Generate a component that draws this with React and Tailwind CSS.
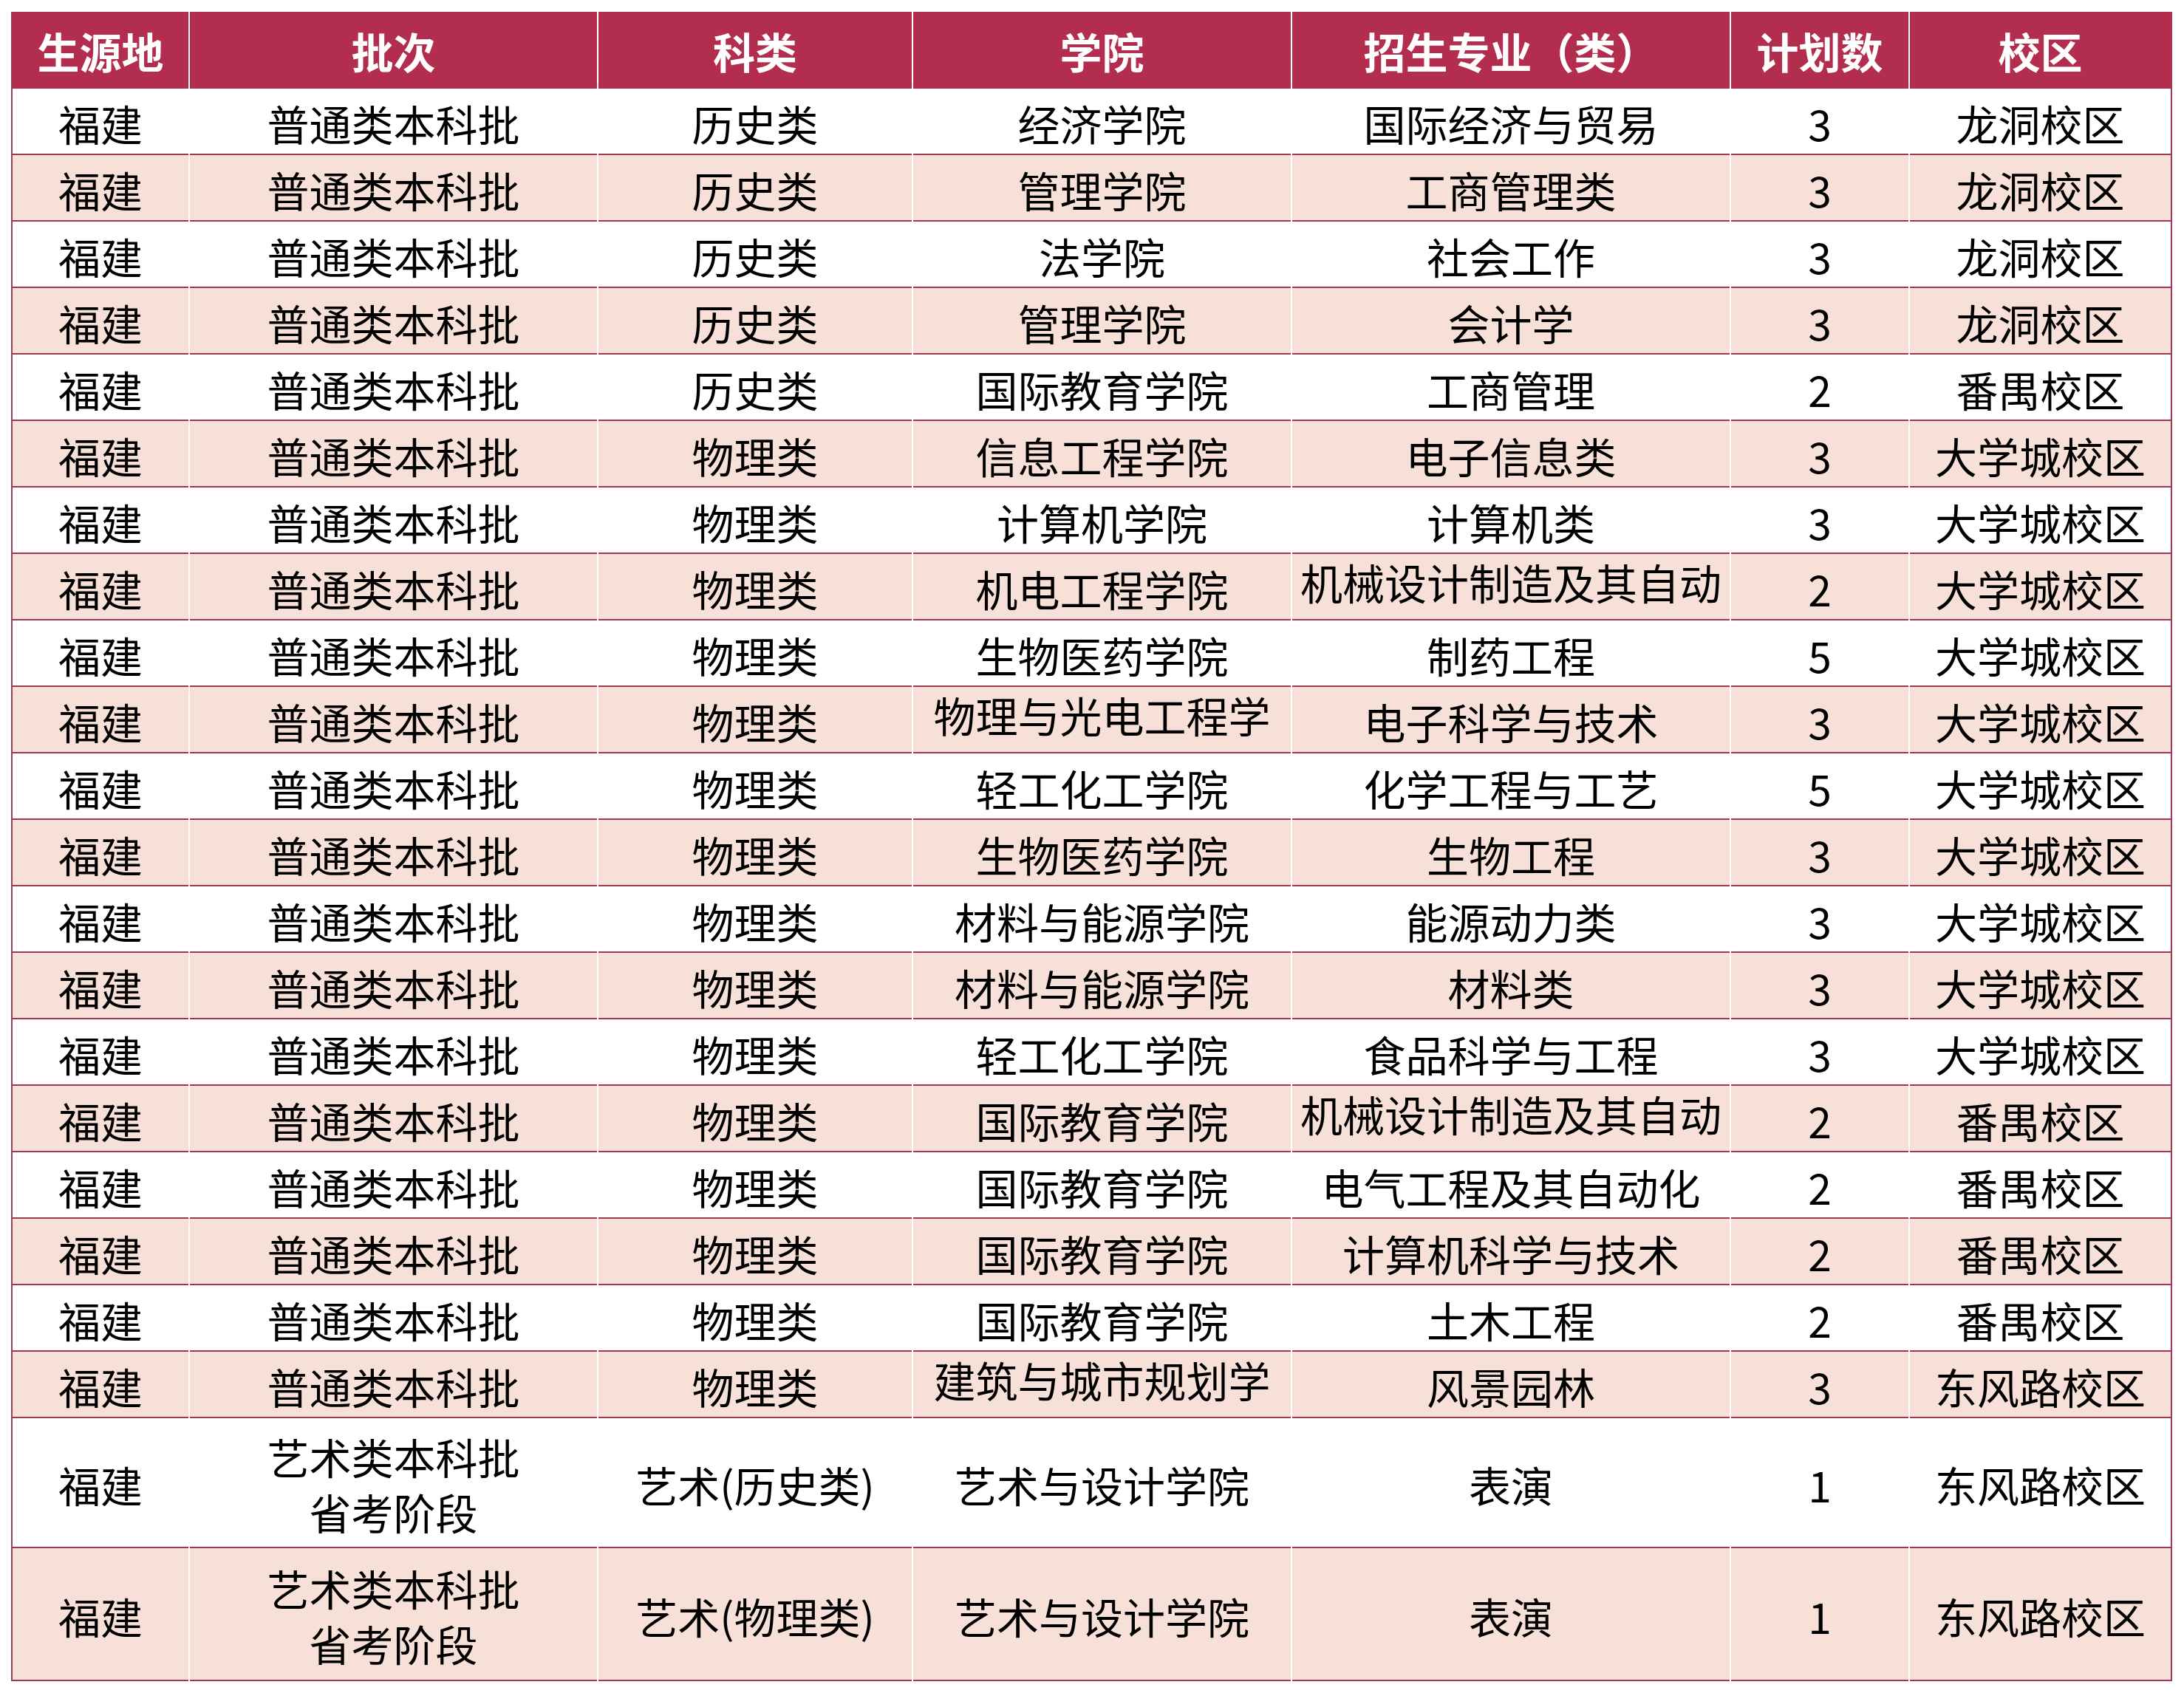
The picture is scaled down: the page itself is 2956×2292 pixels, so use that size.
import React from "react";

const headers = ["生源地", "批次", "科类", "学院", "招生专业（类）", "计划数", "校区"];

// clip: index of a cell whose text is the visible first line of a longer name
const rows = [
  { cells: ["福建", "普通类本科批", "历史类", "经济学院", "国际经济与贸易", "3", "龙洞校区"] },
  { cells: ["福建", "普通类本科批", "历史类", "管理学院", "工商管理类", "3", "龙洞校区"] },
  { cells: ["福建", "普通类本科批", "历史类", "法学院", "社会工作", "3", "龙洞校区"] },
  { cells: ["福建", "普通类本科批", "历史类", "管理学院", "会计学", "3", "龙洞校区"] },
  { cells: ["福建", "普通类本科批", "历史类", "国际教育学院", "工商管理", "2", "番禺校区"] },
  { cells: ["福建", "普通类本科批", "物理类", "信息工程学院", "电子信息类", "3", "大学城校区"] },
  { cells: ["福建", "普通类本科批", "物理类", "计算机学院", "计算机类", "3", "大学城校区"] },
  { cells: ["福建", "普通类本科批", "物理类", "机电工程学院", "机械设计制造及其自动", "2", "大学城校区"], clip: 4 },
  { cells: ["福建", "普通类本科批", "物理类", "生物医药学院", "制药工程", "5", "大学城校区"] },
  { cells: ["福建", "普通类本科批", "物理类", "物理与光电工程学", "电子科学与技术", "3", "大学城校区"], clip: 3 },
  { cells: ["福建", "普通类本科批", "物理类", "轻工化工学院", "化学工程与工艺", "5", "大学城校区"] },
  { cells: ["福建", "普通类本科批", "物理类", "生物医药学院", "生物工程", "3", "大学城校区"] },
  { cells: ["福建", "普通类本科批", "物理类", "材料与能源学院", "能源动力类", "3", "大学城校区"] },
  { cells: ["福建", "普通类本科批", "物理类", "材料与能源学院", "材料类", "3", "大学城校区"] },
  { cells: ["福建", "普通类本科批", "物理类", "轻工化工学院", "食品科学与工程", "3", "大学城校区"] },
  { cells: ["福建", "普通类本科批", "物理类", "国际教育学院", "机械设计制造及其自动", "2", "番禺校区"], clip: 4 },
  { cells: ["福建", "普通类本科批", "物理类", "国际教育学院", "电气工程及其自动化", "2", "番禺校区"] },
  { cells: ["福建", "普通类本科批", "物理类", "国际教育学院", "计算机科学与技术", "2", "番禺校区"] },
  { cells: ["福建", "普通类本科批", "物理类", "国际教育学院", "土木工程", "2", "番禺校区"] },
  { cells: ["福建", "普通类本科批", "物理类", "建筑与城市规划学", "风景园林", "3", "东风路校区"], clip: 3 },
  { cells: ["福建", ["艺术类本科批", "省考阶段"], "艺术(历史类)", "艺术与设计学院", "表演", "1", "东风路校区"], tall: "h-[176px]" },
  { cells: ["福建", ["艺术类本科批", "省考阶段"], "艺术(物理类)", "艺术与设计学院", "表演", "1", "东风路校区"], tall: "h-[180px]" },
];

const gridCols = "grid grid-cols-[238px_551px_424px_511px_592px_240px_353px] gap-x-[2px] bg-white";

const App = () => {
  return (
    <div className="min-h-screen bg-white pt-[16px] pl-[15px] font-['Noto_Sans_CJK_SC','Noto_Sans',sans-serif] text-[57px] text-black">
      <div className="w-[2925px] border-x-2 border-[#9e3a58]">
        {/* Header */}
        <div className={`${gridCols} h-[104px]`}>
          {headers.map((h) => (
            <div
              key={h}
              className="bg-[#b32d4f] flex items-center justify-center text-white font-bold leading-none"
            >
              {h}
            </div>
          ))}
        </div>

        {/* Body */}
        {rows.map((row, i) => (
          <div key={i} className={`${gridCols} ${row.tall || "h-[90px]"}`}>
            {row.cells.map((cell, j) => (
              <div
                key={j}
                className={`flex items-center justify-center whitespace-nowrap border-b-2 border-[#9e3a58] ${
                  i % 2 === 1 ? "bg-[#f7e0d8]" : "bg-white"
                } ${row.clip === j ? "pb-[14px]" : "pt-[4px]"}`}
              >
                {Array.isArray(cell) ? (
                  <div className="flex flex-col items-center leading-[75px]">
                    {cell.map((line) => (
                      <span key={line}>{line}</span>
                    ))}
                  </div>
                ) : (
                  <span className="leading-[64px]">{cell}</span>
                )}
              </div>
            ))}
          </div>
        ))}
      </div>
    </div>
  );
};

export default App;
